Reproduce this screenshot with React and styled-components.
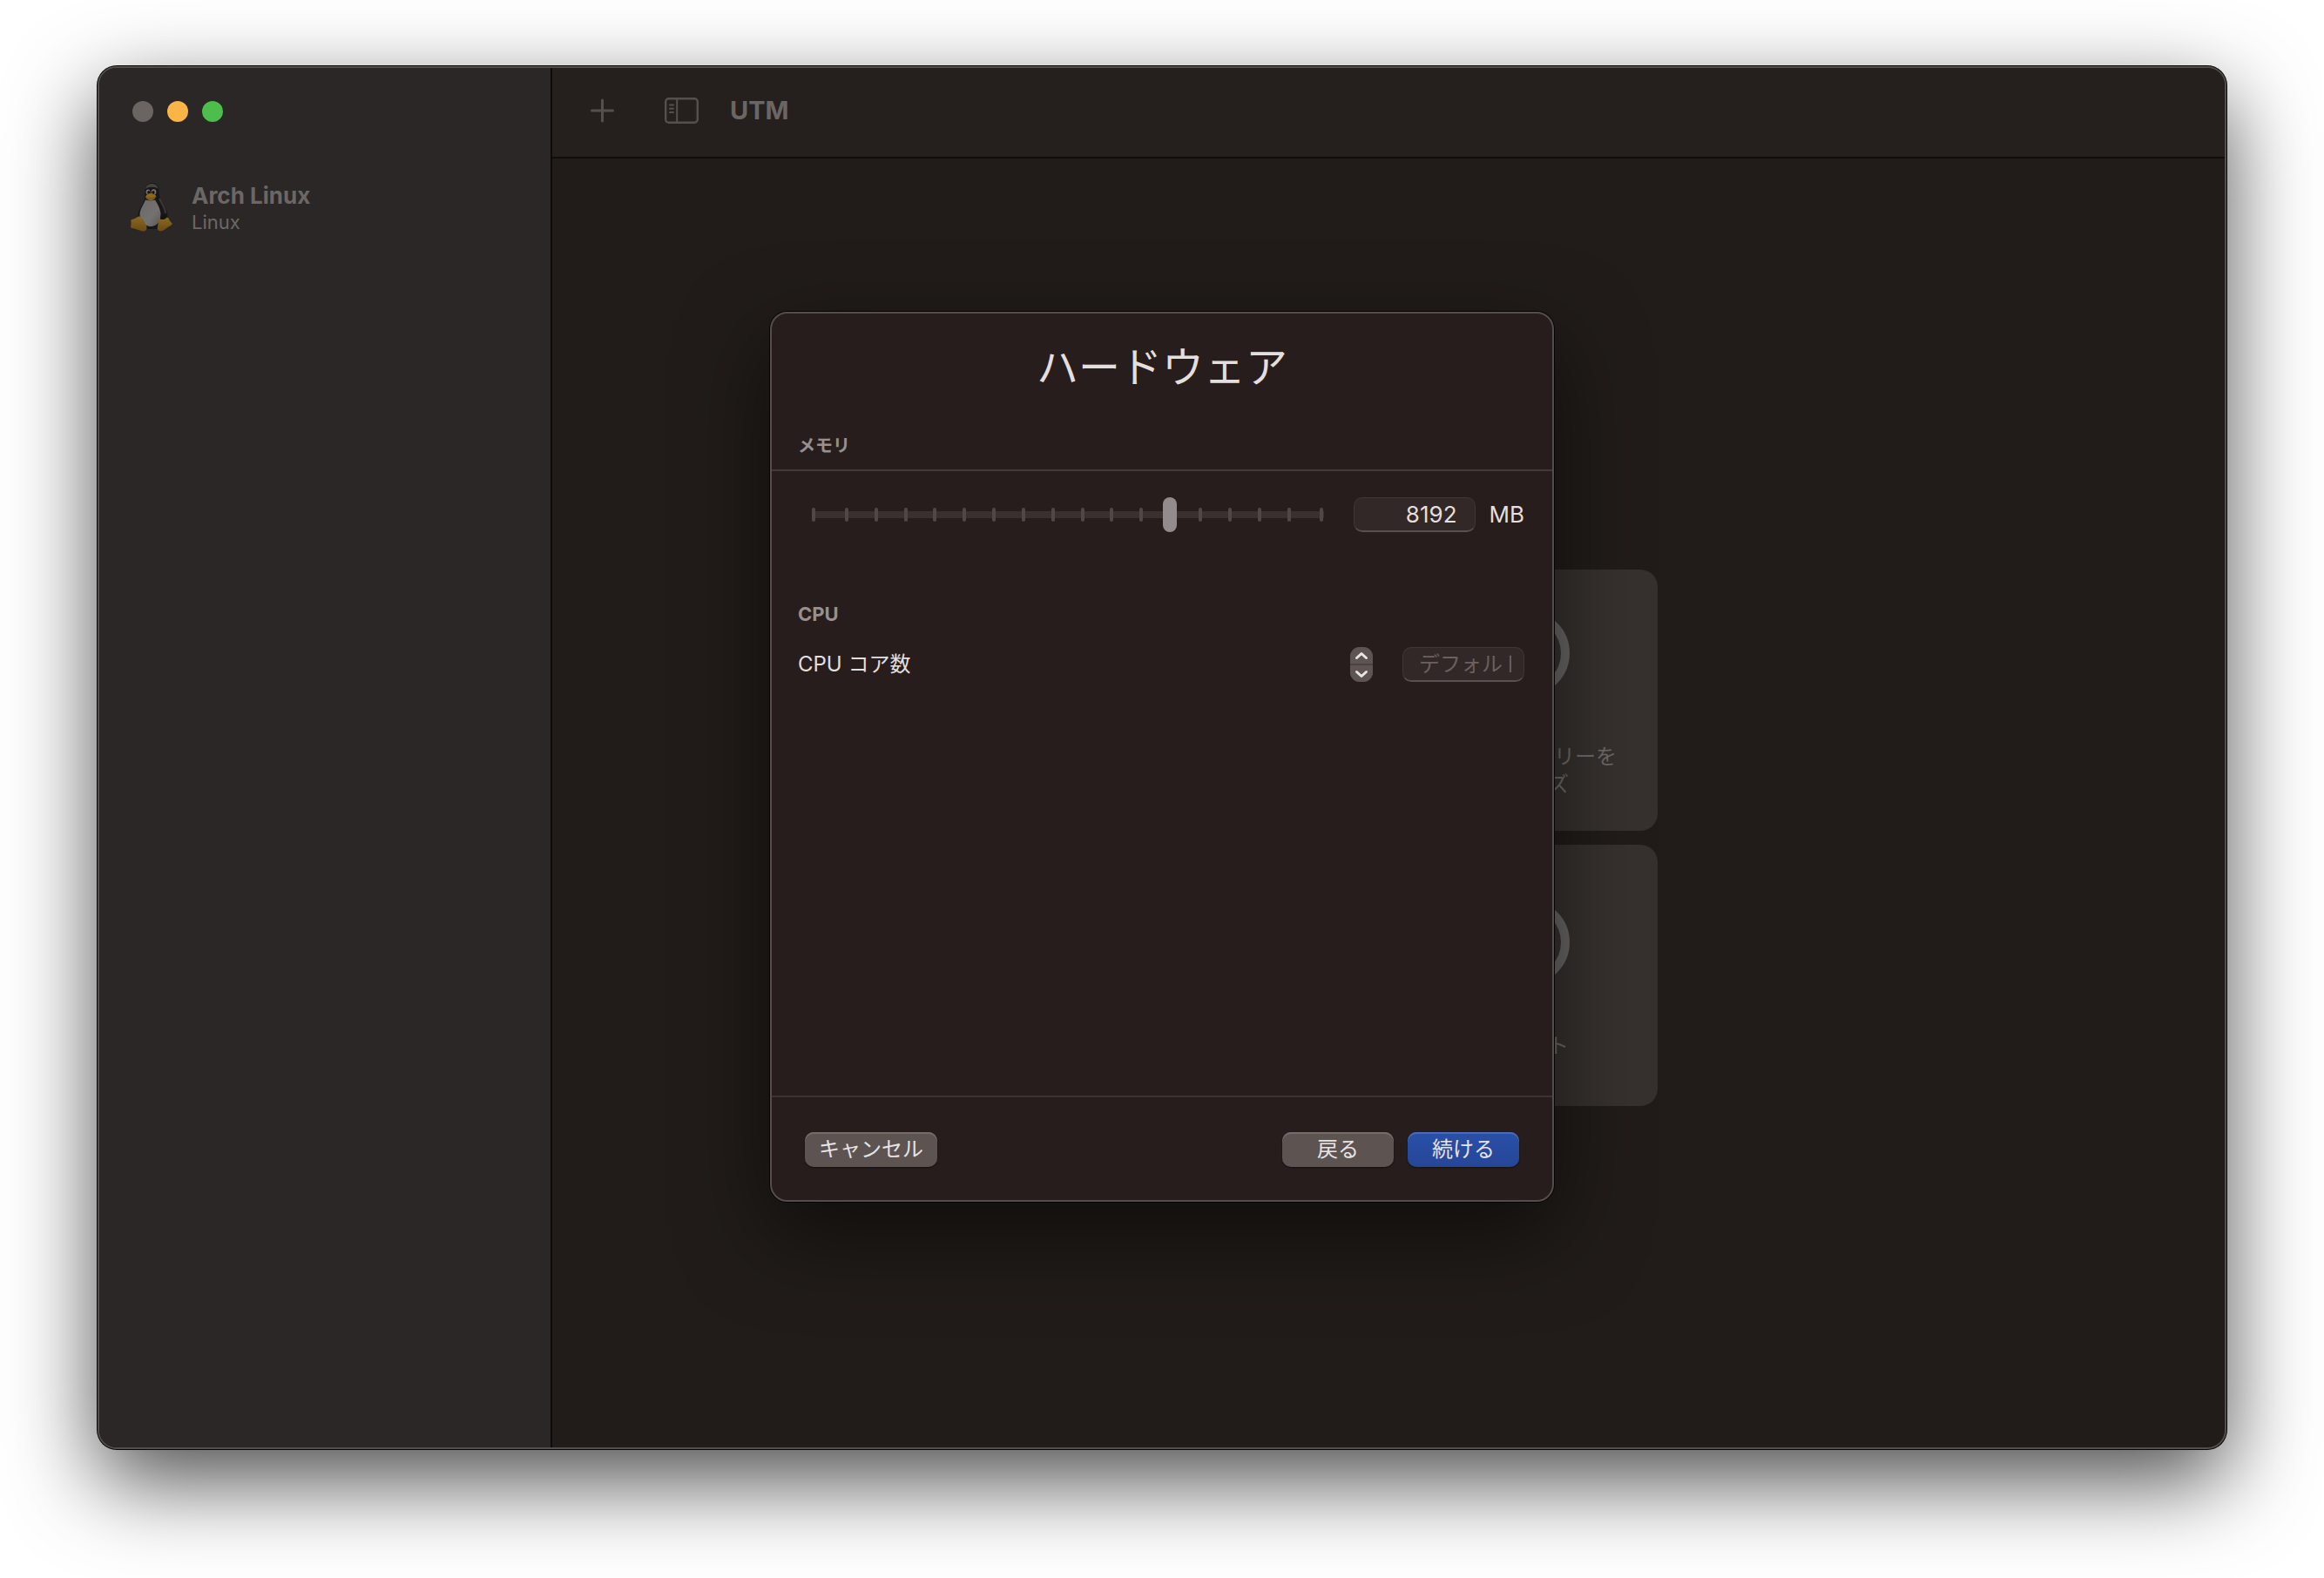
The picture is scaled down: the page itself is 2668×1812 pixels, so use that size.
import React, { useState } from "react";
import styled, { createGlobalStyle } from "styled-components";

const GlobalStyle = createGlobalStyle`
  *, *::before, *::after { box-sizing: border-box; }
  body {
    margin: 0;
    background: #fff;
    color: #e2dfde;
    font-family: Inter, "Noto Sans CJK JP", sans-serif;
    font-size: 24px;
    line-height: 32px;
  }
  button, input { font: inherit; color: inherit; margin: 0; }
`;

const Desktop = styled.div`
  display: flex;
  min-height: 100vh;
  padding: 76px 112px 148px;
  overflow: hidden;
`;

const AppWindow = styled.div`
  position: relative;
  flex: 1;
  display: flex;
  min-width: 0;
  border: 2px solid #524e4c;
  border-radius: 22px;
  background: #211c19;
  box-shadow: 0 0 0 1px #060606, 0 36px 100px rgba(0, 0, 0, 0.7);
`;

const Sidebar = styled.aside`
  flex: 0 0 520px;
  padding: 38px 36px;
  background: #2b2726;
  border-right: 2px solid #0e0b0a;
  border-radius: 20px 0 0 20px;
`;

const TrafficLights = styled.div`
  display: flex;
  gap: 16px;
  margin-bottom: 68px;
  padding: 0 2px;
`;

const Light = styled.button`
  width: 24px;
  height: 24px;
  padding: 0;
  border: 0;
  border-radius: 50%;
  background: ${(p) => p.$color};
`;

const MachineRow = styled.a`
  display: flex;
  align-items: center;
  gap: 22px;
  color: #6b6766;
  text-decoration: none;
`;

const MachineName = styled.div`
  font-size: 26px;
  font-weight: 700;
  line-height: 34px;
`;

const MachineSystem = styled.div`
  font-size: 22px;
  line-height: 26px;
`;

const Main = styled.main`
  flex: 1;
  display: flex;
  flex-direction: column;
  min-width: 0;
`;

const Toolbar = styled.header`
  display: flex;
  align-items: center;
  height: 104px;
  padding: 0 44px 4px;
  background: #25201d;
  border-bottom: 2px solid #100d0b;
  border-radius: 0 20px 0 0;
`;

const ToolButton = styled.button`
  display: flex;
  margin-right: ${(p) => p.$gap}px;
  padding: 0;
  border: 0;
  background: none;
`;

const AppTitle = styled.h1`
  margin: 0;
  color: #6b6664;
  font-size: 29px;
  font-weight: 700;
  line-height: 36px;
`;

const Welcome = styled.section`
  flex: 1;
  display: flex;
  align-items: center;
  justify-content: center;
  padding: 80px 0 0 2px;
`;

const CardGrid = styled.div`
  display: grid;
  grid-template-columns: repeat(2, 300px);
  grid-auto-rows: 300px;
  gap: 16px;
`;

const Card = styled.a`
  grid-column: 2;
  display: flex;
  flex-direction: column;
  align-items: center;
  justify-content: center;
  gap: 54px;
  padding-top: 10px;
  border-radius: 20px;
  background: #36312e;
  color: #6d6a68;
  text-align: center;
  text-decoration: none;
`;

const Overlay = styled.div`
  position: absolute;
  inset: 0;
  display: grid;
  place-items: center;
  padding-bottom: 2px;
`;

const Sheet = styled.form`
  display: flex;
  flex-direction: column;
  width: 900px;
  max-width: 100%;
  min-height: 1022px;
  border: 2px solid #554d4b;
  border-radius: 20px;
  background: #271d1c;
  box-shadow: 0 0 0 1px #050404, 0 36px 100px rgba(0, 0, 0, 0.55);
`;

const SheetTitle = styled.h2`
  margin: 0;
  padding: 26px 30px 40px;
  font-size: 48px;
  font-weight: 400;
  line-height: 72px;
  text-align: center;
`;

const SectionTitle = styled.h3`
  margin: 0;
  padding: 0 30px;
  color: #979090;
  font-size: ${(p) => p.$size}px;
  font-weight: 700;
  line-height: 28px;
`;

const Divider = styled.hr`
  width: 100%;
  margin: 13px 0 30px;
  border: 0;
  border-top: 2px solid #433938;
`;

const Field = styled.div`
  display: flex;
  align-items: center;
  height: 40px;
  margin: ${(p) => p.$above || 0}px 0 ${(p) => p.$below || 0}px;
  padding: 0 32px 0 30px;
`;

const FieldLabel = styled.label`
  flex: 1;
`;

const SliderBox = styled.div`
  flex: 1;
  display: grid;
  align-items: center;
  margin: 0 34px 0 16px;

  & > * { grid-area: 1 / 1; }
`;

const Track = styled.div`
  height: 8px;
  background: #3a302f;
`;

const Ticks = styled.div`
  display: flex;
  justify-content: space-between;
`;

const Tick = styled.span`
  width: 4px;
  height: 16px;
  border-radius: 2px;
  background: #514746;

  &:first-child { margin-right: 4px; }
  &:last-child { margin-left: 4px; }
`;

const Range = styled.input`
  appearance: none;
  width: 100%;
  height: 40px;
  background: none;
  outline: none;

  &::-webkit-slider-runnable-track { height: 40px; background: none; }
  &::-webkit-slider-thumb {
    appearance: none;
    width: 16px;
    height: 40px;
    border-radius: 8px;
    background: #948c8c;
  }
`;

const TextBox = styled.input`
  width: 140px;
  height: 40px;
  padding: 0 14px 0 18px;
  border: 1px solid #403635;
  border-bottom: 2px solid #5a504f;
  border-radius: 10px;
  background: #322827;
  outline: none;

  &::placeholder { color: #6a6160; opacity: 1; }
`;

const MemoryBox = styled(TextBox)`
  padding: 0 20px;
  font-size: 26px;
  text-align: right;
`;

const Unit = styled.label`
  margin-left: 16px;
  font-size: 26px;
`;

const Stepper = styled.div`
  display: flex;
  flex-direction: column;
  gap: 2px;
  width: 26px;
  height: 40px;
  margin-right: 34px;
  overflow: hidden;
  border-radius: 11px;
  background: #4b4241;
`;

const StepButton = styled.button`
  flex: 1;
  display: flex;
  align-items: center;
  justify-content: center;
  padding: 0;
  border: 0;
  background: #5e5553;
`;

const Footer = styled.footer`
  display: flex;
  gap: 16px;
  margin-top: auto;
  padding: 40px 38px 38px;
  border-top: 2px solid #3d3332;
`;

const PushButton = styled.button`
  width: ${(p) => p.$width}px;
  height: 40px;
  margin-right: ${(p) => (p.$pushRest ? "auto" : "0")};
  padding: 0;
  border: 0;
  border-radius: 10px;
  background: ${(p) => (p.$primary ? "linear-gradient(#2950a8, #264698)" : "#5d5452")};
  box-shadow: inset 0 2px 0 ${(p) => (p.$primary ? "#4a6cb8" : "#766d6b")}, 0 1px 2px rgba(0, 0, 0, 0.5);
  color: #e6e4e4;
  line-height: 38px;
`;

const Tux = () => (
  <svg width="48" height="56" viewBox="0 0 48 56" aria-hidden="true">
    <defs>
      <linearGradient id="belly" x1="0" y1="0" x2="1" y2="1">
        <stop offset="0" stopColor="#6c6968" />
        <stop offset="0.6" stopColor="#747271" />
        <stop offset="1" stopColor="#5a5857" />
      </linearGradient>
      <linearGradient id="foot" x1="0" y1="0" x2="0" y2="1">
        <stop offset="0" stopColor="#8a6920" />
        <stop offset="1" stopColor="#6b4a16" />
      </linearGradient>
    </defs>
    <path
      d="M16.500 9C16.500 3.500 19.500 0 24.500 0c5.500 0 8 3.500 8 9 0 3.500.5 7.500 2.500 11 3 5.500 7.500 11 7.500 18.500 0 6-4 13.500-9 14.500H18C12 52 8 47 8 40c0-8 4.500-13 7-19 1.500-3.500 1.500-8 1.500-12z"
      fill="#191818"
    />
    <path d="M17 7c.5-4 4-6 7.500-6s6.500 2 7.200 6c-3-3-11.700-3-14.700 0z" fill="#454342" />
    <path d="M33 18c2.500 6 6.500 10 7 17" stroke="#3b3938" strokeWidth="2" fill="none" />
    <path d="M17 19.500c3 1 8.500 1 11 0 3 5 6.500 11 6.500 17.500 0 7.500-5 13-11.500 13S10.500 44 10.500 36.500C10.500 30 15 25 17 19.500z" fill="url(#belly)" />
    <ellipse cx="20" cy="10.500" rx="2.400" ry="3" fill="#757372" />
    <ellipse cx="26.500" cy="10.500" rx="2.800" ry="3.200" fill="#757372" />
    <ellipse cx="20.700" cy="11" rx="1.500" ry="2" fill="#111" />
    <ellipse cx="26" cy="11" rx="1.600" ry="2" fill="#111" />
    <path d="M17 16c1-2.500 4-4 6-4s5 1.500 6.500 3c-1 3-4 5-6.500 5-2.500-.2-5.500-1.500-6-4z" fill="#8c6720" />
    <path d="M17.500 16.500c4 2 8 1.500 11.500-.5" stroke="#5f4212" strokeWidth="0.8" fill="none" />
    <path d="M8 39c2.500-1.500 4.500 0 6 3l4 7c1.500 4-.5 7-4.500 6.500C9 54.500 5 52.500 1.500 52c-2-.5-1.500-3-1-5 .3-2-.8-4 .5-4.800C3 41.500 6 41 8 39z" fill="url(#foot)" />
    <path d="M32.500 41c1.500 1.500 5 1.500 7.500-.5 1.500-1.500 3.500-.5 4 1 .5 2.500 2.500 3.500 3.500 5 .8 2-2.500 3-5 4.500-3 2-5 4.500-8 4.500s-4.500-2-3.500-5.500c.8-3 .5-6 1.500-9z" fill="url(#foot)" />
    <path d="M34.500 37.500c2-2 5-1 6.500 1 .5 2-2 3.500-4 3.500s-3.500-2-2.500-4.500z" fill="#151414" />
  </svg>
);

const PlusIcon = () => (
  <svg width="27" height="28" viewBox="0 0 27 28" fill="none" stroke="#55504d" strokeWidth="3" strokeLinecap="round" aria-hidden="true">
    <path d="M13.500 2v24M1.500 14h24" />
  </svg>
);

const SidebarIcon = () => (
  <svg width="39" height="30" viewBox="0 0 39 30" fill="none" stroke="#55504d" strokeLinecap="round" aria-hidden="true">
    <rect x="1.200" y="1.200" width="36.600" height="27.600" rx="3.500" strokeWidth="2.400" />
    <path d="M14.200 2v26" strokeWidth="2" />
    <path d="M6 8.500h4M6 12.800h4M6 17h4" strokeWidth="2" />
  </svg>
);

const GlobeIcon = () => (
  <svg width="98" height="98" viewBox="0 0 98 98" fill="none" stroke="#686665" aria-hidden="true">
    <circle cx="49" cy="49" r="44" strokeWidth="10" />
    <path d="M49 5v88M5 49h64" strokeWidth="6" />
  </svg>
);

const HelpIcon = () => (
  <svg width="98" height="98" viewBox="0 0 98 98" fill="none" stroke="#686665" aria-hidden="true">
    <circle cx="49" cy="49" r="44" strokeWidth="10" />
    <path d="M37 38c0-16 24-16 24-1 0 10-12 9-12 20M49 68v3" strokeWidth="8" strokeLinecap="round" />
  </svg>
);

const Chevron = ({ d }) => (
  <svg width="16" height="10" viewBox="0 0 16 10" fill="none" stroke="#e8e6e5" strokeWidth="3" strokeLinecap="round" strokeLinejoin="round" aria-hidden="true">
    <path d={d} />
  </svg>
);

const TICK_COUNT = 18;

export default function App() {
  const [step, setStep] = useState(12);
  const [memory, setMemory] = useState("8192");
  const [cores, setCores] = useState("");

  const moveSlider = (e) => {
    const next = Number(e.target.value);
    setStep(next);
    setMemory(String(2 ** (next + 1)));
  };
  const changeCores = (by) => {
    const next = Math.max(0, Number(cores || 0) + by);
    setCores(next ? String(next) : "");
  };

  return (
    <>
      <GlobalStyle />
      <Desktop>
        <AppWindow>
          <Sidebar>
            <TrafficLights>
              <Light $color="#6b6562" aria-label="閉じる" />
              <Light $color="#fbb547" aria-label="しまう" />
              <Light $color="#4dbd4b" aria-label="拡大" />
            </TrafficLights>
            <MachineRow href="#arch-linux">
              <Tux />
              <div>
                <MachineName>Arch Linux</MachineName>
                <MachineSystem>Linux</MachineSystem>
              </div>
            </MachineRow>
          </Sidebar>

          <Main>
            <Toolbar>
              <ToolButton $gap={58} aria-label="新規"><PlusIcon /></ToolButton>
              <ToolButton $gap={36} aria-label="サイドバー"><SidebarIcon /></ToolButton>
              <AppTitle>UTM</AppTitle>
            </Toolbar>
            <Welcome>
              <CardGrid>
                <Card href="#gallery">
                  <GlobeIcon />
                  <span>UTM ギャラリーを<br />ブラウズ</span>
                </Card>
                <Card href="#support">
                  <HelpIcon />
                  <span>サポート</span>
                </Card>
              </CardGrid>
            </Welcome>
          </Main>

          <Overlay>
            <Sheet role="dialog" aria-labelledby="sheet-title" onSubmit={(e) => e.preventDefault()}>
              <SheetTitle id="sheet-title">ハードウェア</SheetTitle>

              <SectionTitle $size={20}>メモリ</SectionTitle>
              <Divider />
              <Field $below={80}>
                <SliderBox>
                  <Track />
                  <Ticks>
                    {Array.from({ length: TICK_COUNT }, (_, i) => <Tick key={i} />)}
                  </Ticks>
                  <Range type="range" aria-label="メモリ" min="0" max={TICK_COUNT - 1} value={step} onChange={moveSlider} />
                </SliderBox>
                <MemoryBox id="memory" value={memory} onChange={(e) => setMemory(e.target.value)} />
                <Unit htmlFor="memory">MB</Unit>
              </Field>

              <SectionTitle $size={22}>CPU</SectionTitle>
              <Field $above={24}>
                <FieldLabel htmlFor="cores">CPU コア数</FieldLabel>
                <Stepper>
                  <StepButton type="button" aria-label="増やす" onClick={() => changeCores(1)}><Chevron d="M2.500 7.500l5.500-5 5.500 5" /></StepButton>
                  <StepButton type="button" aria-label="減らす" onClick={() => changeCores(-1)}><Chevron d="M2.500 2.500l5.500 5 5.500-5" /></StepButton>
                </Stepper>
                <TextBox id="cores" placeholder="デフォルト" value={cores} onChange={(e) => setCores(e.target.value)} />
              </Field>

              <Footer>
                <PushButton type="button" $width={152} $pushRest>キャンセル</PushButton>
                <PushButton type="button" $width={128}>戻る</PushButton>
                <PushButton type="submit" $width={128} $primary>続ける</PushButton>
              </Footer>
            </Sheet>
          </Overlay>
        </AppWindow>
      </Desktop>
    </>
  );
}
